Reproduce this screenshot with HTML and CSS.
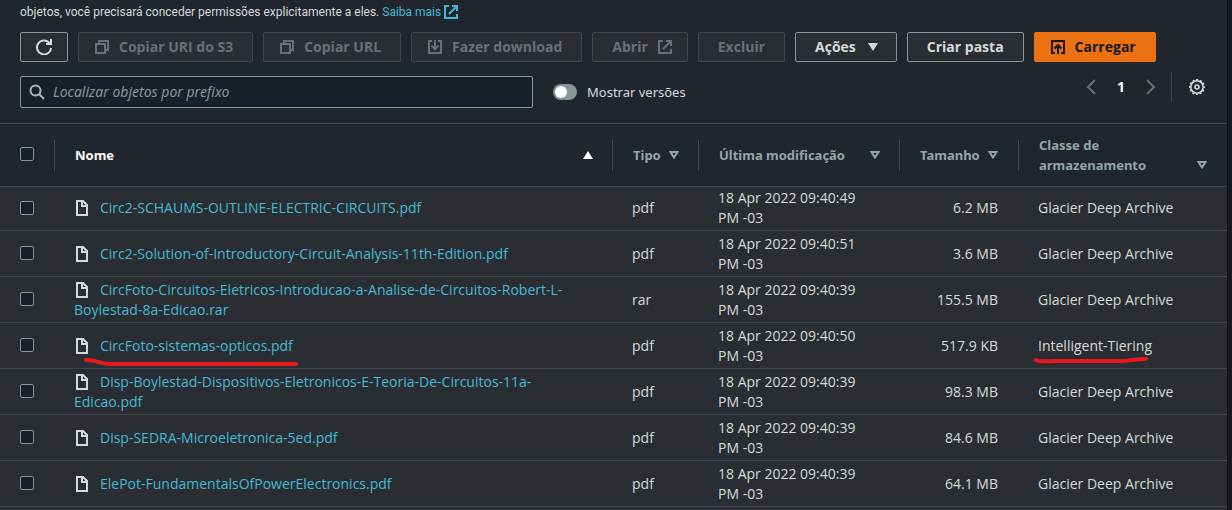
FILE: index.html
```
<!DOCTYPE html>
<html lang="pt-BR">
<head>
<meta charset="utf-8">
<title>Objetos</title>
<link rel="stylesheet" href="styles.css">
</head>
<body>
<svg class="sprite" aria-hidden="true">
  <symbol id="copy" viewBox="0 0 14 14"><path d="M4 4V1h9v9h-3M1 4h9v9H1z"/></symbol>
  <symbol id="download" viewBox="0 0 14 14"><path d="M4 1H1v12h12V1h-3M7 0v9M3.500 5.500L7 9l3.500-3.500"/></symbol>
  <symbol id="upload" viewBox="0 0 14 14"><path d="M4 13H1V1h12v12h-3M7 14V5M3.500 8.500L7 5l3.500 3.500"/></symbol>
  <symbol id="external" viewBox="0 0 14 14"><path d="M5 1H1v12h12V9M8 1h5v5M13 1L5 9"/></symbol>
  <symbol id="file" viewBox="0 0 12 16"><path d="M1 1h6l4 4v10H1zM6 1v5h5"/></symbol>
  <symbol id="sort" viewBox="0 0 10 8"><path d="M1.500 1h7L5 6.500z"/></symbol>
</svg>
<main class="panel">
  <header class="head">
    <p class="intro">objetos, você precisará conceder permissões explicitamente a eles. <a href="#">Saiba mais <svg class="icon"><use href="#external"/></svg></a></p>
    <div class="actions">
      <button class="btn refresh" aria-label="Atualizar"><svg class="icon-lg" viewBox="0 0 16 16"><path d="M15 9A7 7 0 1 1 13 3.500L15 5M15 0v5H10"/></svg></button>
      <button class="btn with-icon" disabled><svg class="icon"><use href="#copy"/></svg>Copiar URI do S3</button>
      <button class="btn with-icon" disabled><svg class="icon"><use href="#copy"/></svg>Copiar URL</button>
      <button class="btn with-icon" disabled><svg class="icon"><use href="#download"/></svg>Fazer download</button>
      <button class="btn icon-end" disabled>Abrir<svg class="icon"><use href="#external"/></svg></button>
      <button class="btn" disabled>Excluir</button>
      <button class="btn menu">Ações<svg class="caret" viewBox="0 0 10 8"><path d="M0 0h10L5 8z"/></svg></button>
      <button class="btn">Criar pasta</button>
      <button class="btn with-icon primary"><svg class="icon"><use href="#upload"/></svg>Carregar</button>
    </div>
    <div class="tools">
      <label class="search">
        <svg class="icon-lg" viewBox="0 0 16 16"><circle cx="6.500" cy="6.500" r="5"/><path d="M10 10l5 5"/></svg>
        <input type="text" placeholder="Localizar objetos por prefixo" aria-label="Localizar objetos por prefixo">
      </label>
      <label class="toggle"><input type="checkbox">Mostrar versões</label>
      <nav class="pager" aria-label="Paginação">
        <button aria-label="Página anterior"><svg class="chevron" viewBox="0 0 10 16"><path d="M9 1L2 8l7 7"/></svg></button>
        <button class="page">1</button>
        <button aria-label="Próxima página"><svg class="chevron" viewBox="0 0 10 16"><path d="M1 1l7 7-7 7"/></svg></button>
        <button class="settings" aria-label="Preferências"><svg class="icon-lg" viewBox="0 0 16 16"><circle class="ring" cx="8" cy="8" r="6.200"/><circle class="teeth" cx="8" cy="8" r="7.300"/><circle class="ring" cx="8" cy="8" r="2"/></svg></button>
      </nav>
    </div>
  </header>
  <table class="objects">
    <colgroup><col class="c-check"><col><col class="c-type"><col class="c-date"><col class="c-size"><col class="c-class"></colgroup>
    <thead>
      <tr>
        <th><input class="check" type="checkbox" aria-label="Selecionar tudo"></th>
        <th aria-sort="ascending"><button class="sort spread active">Nome<svg class="caret" viewBox="0 0 10 8"><path d="M0 8h10L5 0z"/></svg></button></th>
        <th><button class="sort">Tipo<svg class="caret"><use href="#sort"/></svg></button></th>
        <th><button class="sort spread">Última modificação<svg class="caret"><use href="#sort"/></svg></button></th>
        <th><button class="sort">Tamanho<svg class="caret"><use href="#sort"/></svg></button></th>
        <th><button class="sort spread low">Classe de<br>armazenamento<svg class="caret"><use href="#sort"/></svg></button></th>
      </tr>
    </thead>
    <tbody>
      <tr><td><input class="check" type="checkbox" aria-label="Selecionar"></td><td><svg class="file"><use href="#file"/></svg><a href="#">Circ2-SCHAUMS-OUTLINE-ELECTRIC-CIRCUITS.pdf</a></td><td>pdf</td><td>18 Apr 2022 09:40:49<br>PM -03</td><td class="num">6.2 MB</td><td>Glacier Deep Archive</td></tr>
      <tr><td><input class="check" type="checkbox" aria-label="Selecionar"></td><td><svg class="file"><use href="#file"/></svg><a href="#">Circ2-Solution-of-Introductory-Circuit-Analysis-11th-Edition.pdf</a></td><td>pdf</td><td>18 Apr 2022 09:40:51<br>PM -03</td><td class="num">3.6 MB</td><td>Glacier Deep Archive</td></tr>
      <tr><td><input class="check" type="checkbox" aria-label="Selecionar"></td><td><svg class="file"><use href="#file"/></svg><a href="#">CircFoto-Circuitos-Eletricos-Introducao-a-Analise-de-Circuitos-Robert-L-<wbr>Boylestad-8a-Edicao.rar</a></td><td>rar</td><td>18 Apr 2022 09:40:39<br>PM -03</td><td class="num">155.5 MB</td><td>Glacier Deep Archive</td></tr>
      <tr><td><input class="check" type="checkbox" aria-label="Selecionar"></td><td class="marked"><svg class="file"><use href="#file"/></svg><a href="#">CircFoto-sistemas-opticos.pdf</a><svg class="mark mark-name" viewBox="0 0 216 10"><path d="M3 3c8-1 13 4 24 4h186"/></svg></td><td>pdf</td><td>18 Apr 2022 09:40:50<br>PM -03</td><td class="num">517.9 KB</td><td class="marked">Intelligent-Tiering<svg class="mark mark-class" viewBox="0 0 116 10"><path d="M3 5c2 2 10 1 20 1h65c10 0 14-2 25-2"/></svg></td></tr>
      <tr><td><input class="check" type="checkbox" aria-label="Selecionar"></td><td><svg class="file"><use href="#file"/></svg><a href="#">Disp-Boylestad-Dispositivos-Eletronicos-E-Teoria-De-Circuitos-11a-<br>Edicao.pdf</a></td><td>pdf</td><td>18 Apr 2022 09:40:39<br>PM -03</td><td class="num">98.3 MB</td><td>Glacier Deep Archive</td></tr>
      <tr><td><input class="check" type="checkbox" aria-label="Selecionar"></td><td><svg class="file"><use href="#file"/></svg><a href="#">Disp-SEDRA-Microeletronica-5ed.pdf</a></td><td>pdf</td><td>18 Apr 2022 09:40:39<br>PM -03</td><td class="num">84.6 MB</td><td>Glacier Deep Archive</td></tr>
      <tr><td><input class="check" type="checkbox" aria-label="Selecionar"></td><td><svg class="file"><use href="#file"/></svg><a href="#">ElePot-FundamentalsOfPowerElectronics.pdf</a></td><td>pdf</td><td>18 Apr 2022 09:40:39<br>PM -03</td><td class="num">64.1 MB</td><td>Glacier Deep Archive</td></tr>
    </tbody>
  </table>
</main>
</body>
</html>
```
FILE: styles.css
```
* { box-sizing: border-box; }
body {
  margin: 0;
  padding-right: 5px;
  background: #16191f;
  color: #d5dbdb;
  font: 13px/20px "Noto Sans", "Open Sans", sans-serif;
}
button, input { font: inherit; color: inherit; }
button { padding: 0; border: 0; background: none; }
a { color: #44b9d6; text-decoration: none; }
svg { fill: none; stroke: currentColor; stroke-width: 2; flex: none; }
.sprite { position: absolute; width: 0; height: 0; }
.icon { width: 14px; height: 14px; }
.icon-lg { width: 16px; height: 16px; }
.caret { width: 10px; height: 8px; }
.btn .caret, .active .caret { fill: currentColor; stroke: none; }

.panel { min-height: 100vh; background: #2a2e33; box-shadow: 1px 0 0 #0f1114; }
.head { padding: 2px 20px 15px; background: #21252c; border-bottom: 1px solid #414750; }
.intro { margin: 0 0 10px; font-family: Roboto, "Open Sans", sans-serif; font-size: 12px; }
.intro .icon { vertical-align: -3px; }

.actions { display: flex; gap: 10px; }
.btn {
  display: flex; align-items: center; justify-content: center;
  height: 30px; padding: 0 19px;
  border: 1px solid #879596; border-radius: 2px;
  background: #2a2e33; color: #d5dbdb;
  font-family: "Open Sans", sans-serif; font-size: 14px;
  font-weight: 700; white-space: nowrap;
}
.btn:disabled { border-color: #414750; color: #687078; }
.refresh { padding: 0 15px; }
.with-icon { gap: 10px; padding-left: 16px; }
.icon-end { gap: 10px; padding-right: 15px; }
.menu { gap: 12px; padding-right: 18px; }
.primary { border-color: #ec7211; background: #ec7211; color: #16191f; }

.tools { display: flex; align-items: center; margin-top: 14px; }
.search {
  display: flex; align-items: center; gap: 8px;
  flex: 0 1 513px; height: 32px; padding: 0 8px;
  border: 1px solid #879596; border-radius: 2px; background: #1a2029;
}
.search svg { color: #aab7b8; }
.search input { flex: 1; min-width: 0; padding: 0; border: 0; outline: 0; background: none; font-size: 14px; }
.search input::placeholder { color: #879596; font-style: italic; opacity: 1; }
.toggle { display: flex; align-items: center; gap: 10px; margin-left: 20px; }
.toggle input {
  appearance: none; display: flex; align-items: center;
  width: 24px; height: 16px; margin: 0; padding: 0 2px;
  border-radius: 8px; background: #879596;
}
.toggle input::before { content: ""; width: 12px; height: 12px; border-radius: 50%; background: #fff; }
.pager { display: flex; align-items: center; align-self: flex-start; height: 30px; margin: -4px 2px 0 auto; }
.pager button { display: flex; }
.chevron { width: 10px; height: 16px; color: #687078; }
.pager .page { margin: 0 21px; color: #fff; font-size: 14px; font-weight: 700; }
.pager .settings { align-items: center; height: 30px; margin-left: 15px; padding-left: 17px; border-left: 1px solid #414750; }
.ring { stroke-width: 1.600; }
.teeth { stroke-width: 1.300; stroke-dasharray: 2.200 1.622; stroke-dashoffset: 1.100; }

.objects { width: 100%; table-layout: fixed; border-spacing: 0; }
.c-check { width: 55px; }
.c-type { width: 86px; }
.c-date { width: 201px; }
.c-size { width: 119px; }
.c-class { width: 208px; }
th, td { border-bottom: 1px solid #414750; text-align: left; }
th { height: 63px; padding: 0; background: #21252c; color: #95a5a6; }
th:not(:last-child) {
  background: linear-gradient(#414750, #414750) right center / 1px 31px no-repeat #21252c;
}
.sort { display: flex; align-items: center; gap: 8px; width: 100%; padding: 0 20px; font-weight: 700; text-align: left; white-space: nowrap; }
.spread { justify-content: space-between; }
.low { align-items: flex-end; }
.low .caret { margin-bottom: 6px; }
.active { color: #fff; }
td { height: 46px; padding: 3px 21px 2px 19px; font-family: "Open Sans", sans-serif; font-size: 14px; }
tbody tr:first-child td { height: 44px; padding-top: 1px; }
th:first-child, tbody td:first-child { padding: 0 0 2px 20px; }
.num { text-align: right; }
.check {
  appearance: none; display: block; width: 14px; height: 14px; margin: 0;
  border: 1px solid #879596; border-radius: 2px; background: #1a2029;
}
.file { width: 12px; height: 16px; margin: 0 12px 0 2px; vertical-align: -3px; }
.marked { position: relative; }
.mark { position: absolute; stroke: #e8191c; stroke-width: 4; stroke-linecap: round; }
.mark-name { left: 28px; top: 34px; width: 216px; height: 10px; }
.mark-class { left: 14px; top: 32px; width: 116px; height: 10px; }
```
